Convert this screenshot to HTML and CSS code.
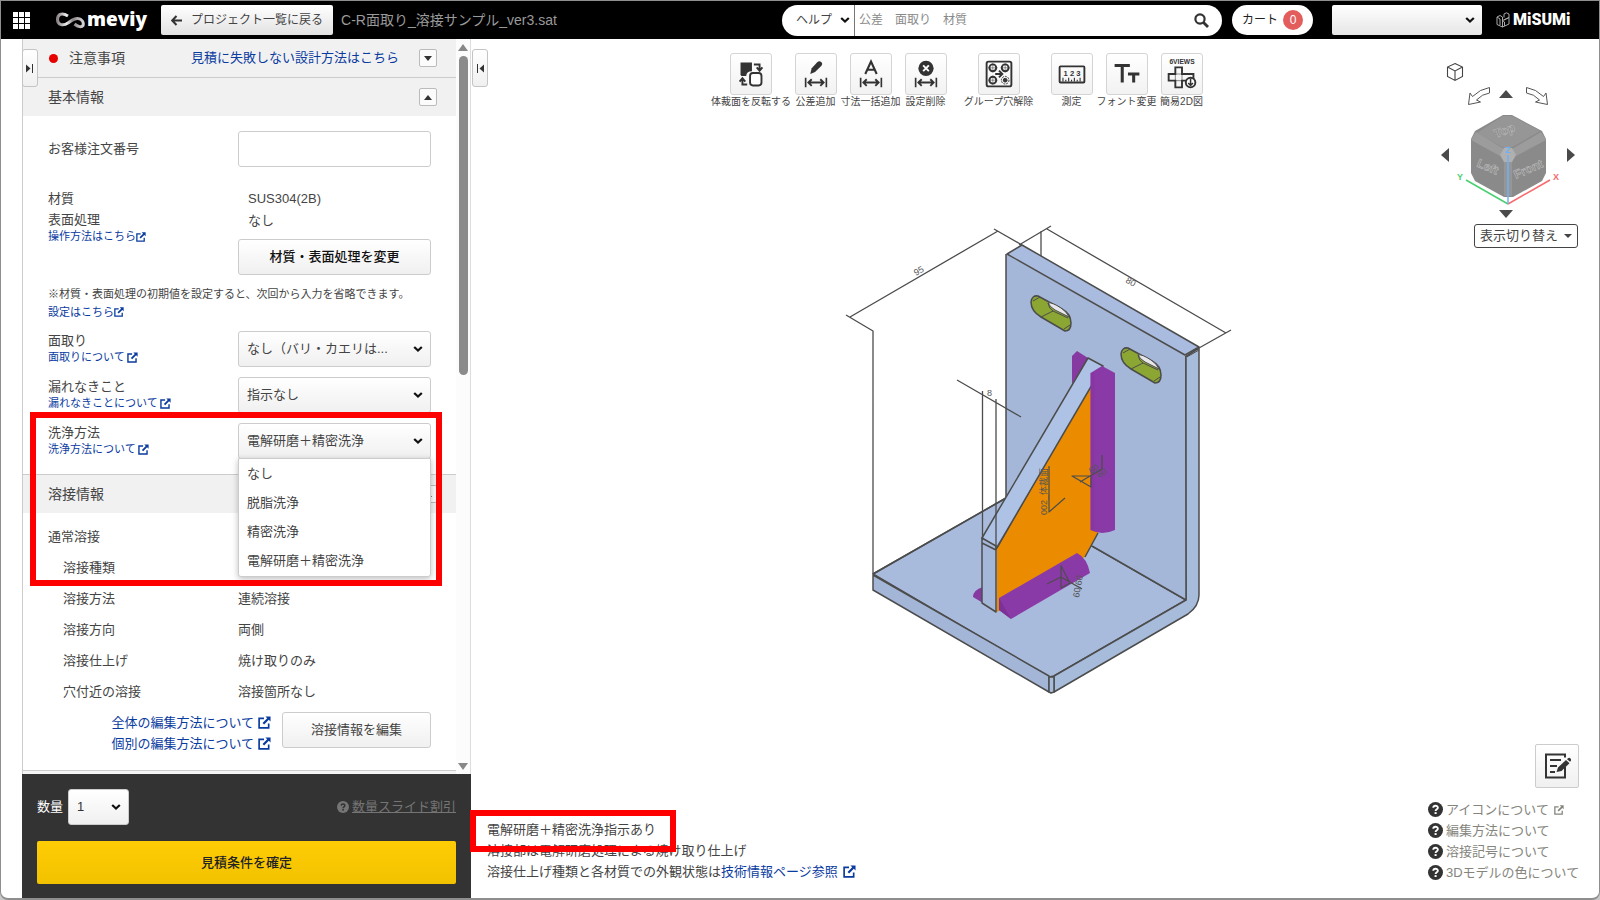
FILE: index.html
```html
<!DOCTYPE html>
<html lang="ja">
<head>
<meta charset="utf-8">
<title>meviy</title>
<link rel="stylesheet" href="styles.css">
</head>
<body>
<svg class="defs" aria-hidden="true">
  <symbol id="ext" viewBox="0 0 14 14"><path d="M6.500 2.500H1.200V12.800H11.500V8" fill="none" stroke="currentColor" stroke-width="1.800"/><path d="M8 .5h5.500V6l-1.900-1.900L6.600 9.200 4.900 7.500l5-5z" fill="currentColor"/></symbol>
  <symbol id="chev" viewBox="0 0 10 8"><path d="M1.200 2 5 5.600 8.800 2" fill="none" stroke="currentColor" stroke-width="2.200"/></symbol>
  <symbol id="help" viewBox="0 0 16 16"><circle cx="8" cy="8" r="8" fill="currentColor"/><path d="M5.600 6.200C5.700 3.300 10.500 3.300 10.500 6.100 10.500 7.900 8.100 7.800 8.100 9.700" fill="none" stroke="var(--mark)" stroke-width="2"/><rect x="7" y="10.800" width="2.200" height="2" fill="var(--mark)"/></symbol>
  <symbol id="span" viewBox="0 0 24 12"><path d="M1 1v10M23 1v10M4 6h16M7.500 2.500 4 6l3.500 3.500M16.500 2.500 20 6l-3.500 3.500" fill="none" stroke="currentColor" stroke-width="2"/></symbol>
</svg>
<div class="window">
  <header class="topbar">
    <button class="apps" aria-label="メニュー"><svg width="17" height="17" viewBox="0 0 17 17"><path fill="#fff" d="M0 0h5v5H0zM6 0h5v5H6zM12 0h5v5h-5zM0 6h5v5H0zM6 6h5v5H6zM12 6h5v5h-5zM0 12h5v5H0zM6 12h5v5H6zM12 12h5v5h-5z"/></svg></button>
    <a class="logo" href="#">
      <svg width="29" height="17" viewBox="0 0 29 17"><defs><linearGradient id="lg"><stop offset="0" stop-color="#8b8589"/><stop offset=".35" stop-color="#eee"/><stop offset=".6" stop-color="#8a8488"/><stop offset="1" stop-color="#d8d4d6"/></linearGradient></defs><path d="M12 4C5-.5 1.500 3 1.500 7.500c0 6 6 6.500 10.500 3.500 4-2.700 6-5 10-4.500 4 .4 6 4 5 7-1.500 2-5 1.500-8.500-1.500" fill="none" stroke="url(#lg)" stroke-width="3"/></svg>
      <span>meviy</span></a>
    <button class="back"><svg width="11" height="11" viewBox="0 0 11 11"><path d="M11 5.500H2M5.500 1 1.200 5.500l4.300 4.500" fill="none" stroke="#333" stroke-width="2"/></svg>プロジェクト一覧に戻る</button>
    <h1 class="filename">C-R面取り_溶接サンプル_ver3.sat</h1>
    <form class="search">
      <label class="pick help-pick"><select aria-label="検索対象"><option>ヘルプ</option></select><svg class="chev"><use href="#chev"/></svg></label>
      <input type="text" placeholder="公差　面取り　材質" aria-label="検索">
      <button type="button" aria-label="検索する"><svg width="15" height="15" viewBox="0 0 15 15"><circle cx="6" cy="6" r="4.600" fill="none" stroke="#333" stroke-width="2.200"/><path d="m9.500 9.500 4.500 4.500" stroke="#333" stroke-width="2.800"/></svg></button>
    </form>
    <button class="cart">カート<span>0</span></button>
    <label class="pick account"><select aria-label="アカウント"><option></option></select><svg class="chev"><use href="#chev"/></svg></label>
    <a class="misumi" href="#"><svg width="14" height="17" viewBox="0 0 14 17" fill="none" stroke="#aaa"><path d="M1 5 4 3.500 6.500 5v10L1 12.500zM1 5l3 2v6M6.500 8.500 13 5.500v6.500l-6.500 3M6.500 8.500l2 1.500v4M8 5.500V2L10.500.800 13 2v3.500L8 8"/></svg><span>MiSUMi</span></a>
  </header>

  <div class="work">
    <aside class="panel">
      <button class="collapse" aria-label="パネルを開く"><svg width="8" height="9" viewBox="0 0 8 9"><path d="M0 .5 4.500 4.500 0 8.500z" fill="#333"/><path d="M6.500 0v9" stroke="#333"/></svg></button>
      <div class="panel-scroll">
        <div class="panel-body">
          <section class="head notice"><i class="dot"></i><h2>注意事項</h2><a href="#">見積に失敗しない設計方法はこちら</a><button class="fold down" aria-label="注意事項を開く"></button></section>
          <section class="head"><h2>基本情報</h2><button class="fold up" aria-label="基本情報を閉じる"></button></section>
          <div class="fields">
            <div class="field order"><label for="order">お客様注文番号</label><input id="order" type="text"></div>
            <div class="field material">
              <div class="names"><p>材質</p><p>表面処理</p><a class="small" href="#">操作方法はこちら<svg class="ext s10"><use href="#ext"/></svg></a></div>
              <div class="values"><p>SUS304(2B)</p><p>なし</p><button class="btn">材質・表面処理を変更</button></div>
            </div>
            <div class="note"><p>※材質・表面処理の初期値を設定すると、次回から入力を省略できます。</p><a href="#">設定はこちら<svg class="ext s10"><use href="#ext"/></svg></a></div>
            <div class="field"><div class="cap"><label for="f1">面取り</label><a href="#">面取りについて<svg class="ext s11"><use href="#ext"/></svg></a></div>
              <div class="pick box"><select id="f1"><option>なし（バリ・カエリは...</option></select><svg class="chev"><use href="#chev"/></svg></div></div>
            <div class="field"><div class="cap"><label for="f2">漏れなきこと</label><a href="#">漏れなきことについて<svg class="ext s11"><use href="#ext"/></svg></a></div>
              <div class="pick box"><select id="f2"><option>指示なし</option></select><svg class="chev"><use href="#chev"/></svg></div></div>
            <div class="field"><div class="cap"><label for="f3">洗浄方法</label><a href="#">洗浄方法について<svg class="ext s11"><use href="#ext"/></svg></a></div>
              <div class="pick box"><select id="f3"><option>電解研磨＋精密洗浄</option></select><svg class="chev"><use href="#chev"/></svg>
                <ul class="menu" role="listbox" aria-label="洗浄方法"><li role="option">なし</li><li role="option">脱脂洗浄</li><li role="option">精密洗浄</li><li role="option" aria-selected="true">電解研磨＋精密洗浄</li></ul>
              </div></div>
          </div>
          <section class="head weld-head"><h2>溶接情報</h2><button class="fold up" aria-label="溶接情報を閉じる"></button></section>
          <div class="weld">
            <h3>通常溶接</h3>
            <dl>
              <dt>溶接種類</dt><dd></dd>
              <dt>溶接方法</dt><dd>連続溶接</dd>
              <dt>溶接方向</dt><dd>両側</dd>
              <dt>溶接仕上げ</dt><dd>焼け取りのみ</dd>
              <dt>穴付近の溶接</dt><dd>溶接箇所なし</dd>
            </dl>
            <div class="edit"><div class="links"><a href="#">全体の編集方法について<svg class="ext s13"><use href="#ext"/></svg></a><a href="#">個別の編集方法について<svg class="ext s13"><use href="#ext"/></svg></a></div><button class="btn soft">溶接情報を編集</button></div>
          </div>
          <div class="next-head"></div>
        </div>
        <div class="scrollbar"><i class="arr-up"></i><i class="thumb"></i><i class="arr-down"></i></div>
      </div>
      <footer class="quote">
        <div class="qty"><label for="qty">数量</label><div class="pick box"><select id="qty"><option>1</option></select><svg class="chev"><use href="#chev"/></svg></div>
          <a href="#"><svg class="q"><use href="#help"/></svg><u>数量スライド割引</u></a></div>
        <button class="confirm">見積条件を確定</button>
      </footer>
    </aside>

    <main class="stage">
      <svg class="model" viewBox="471 39 1128 859" preserveAspectRatio="xMidYMid meet" role="img" aria-label="3Dモデル">
        <g stroke="#4c4c4c" stroke-width="1.500" stroke-linejoin="round" fill="none">
          <path fill="#a9bbdd" d="M873 574 1006 498 1092 546 1186 600 1054 676 1049 677z"/>
          <path fill="#a4b6d7" d="M873 575 1049 676V692L873 590z"/>
          <path fill="#a7bbdb" d="M1185 357 1199 348V595Q1199 606 1188 614L1054 692V676L1186 600z"/>
          <path fill="#a7bbdb" d="M1049 677h5v15l-3 1-2-1z"/>
          <path stroke="none" fill="#a5b7d8" d="M1006 254 1185 355 1186 600 1092 546 1006 498z"/>
          <path d="M1092 546 1186 600V358M1006 498V254M873 574 1006 498"/>
          <path fill="#a9bbdf" d="M1007 254 1022 245 1199 347 1185 355z"/>
          <path stroke-width="1" d="M1185 358 1199 350"/>
          <g id="slot"><path fill="#8ba632" d="M1031 302Q1032 295 1038 296L1062 309Q1071 314 1071 323 1071 331 1065 331L1041 317Q1031 311 1031 302z"/><path fill="#e8e8ec" stroke-width="1" d="M1048 303Q1052 302 1061 308 1067 312 1069 317L1055 310Q1050 307 1048 303z"/><path stroke-width="1" d="M1048 303Q1049 309 1053 311L1068 318M1053 311 1041 317M1033 301 1040 297M1064 329 1070 325"/></g>
          <use href="#slot" x="90" y="52"/>
          <g stroke="none"><path fill="#8639a0" d="M1072 356 1077 351 1088 358 1072 384z"/><path fill="#8639a0" d="M983 587Q973 590 973 597L983 603z"/><path fill="#eb8c00" d="M1091 383 997 548V612L1085 557 1098 533V420z"/></g>
          <path d="M1098 533 1085 557M1091 383 1053 450 997 548"/>
          <path fill="#adc2e5" d="M1088 358 1103 366 996 549 982 538z"/><path fill="#a5b7d8" d="M982 538 996 546V612L982 603zM982 543 996 550"/>
          <g stroke="none"><path fill="#8a3aa6" d="M1090.500 373 1102 366 1115 373V530Q1102 536 1090.500 530z"/><path fill="#8030a0" opacity=".35" d="M1090.500 373h4v158l-4-1z"/><path fill="#8a3aa6" d="M999 598 1077 553Q1087 558 1090 573L1011 619 999 610z"/><path fill="#7c3196" d="M999 598 1011 619 999 610z"/></g>
          <g stroke-width="1.300"><path d="M850 317 998 231M846 315 873 331V574M994 229 1022 245M1047 229 1226 333M1019 245 1051 226M1199 348 1231 330M1041 231V256M957 380 1021 417M982.500 391V540M996 399V550"/></g>
          <g stroke-width="1.200"><path d="M1049 466V512L1065 498M1072 476H1091V487zM1080 482 1102 469V455M1061 566V588L1070 583zM1047 584 1061 577 1082 589"/></g>
        </g>
        <g class="dim"><text transform="translate(916 276) rotate(-30)">95</text><text transform="translate(1125 282) rotate(30)">80</text><text x="987" y="396">8</text><text transform="translate(1047 515) rotate(-90)">002_体裁面</text><text transform="translate(1091 474) rotate(-30)">60</text><text transform="translate(1099 478) rotate(-30)">60</text><text transform="translate(1079 598) rotate(-80)">60/60</text></g>
      </svg>

      <div class="tools">
        <button class="first"><i><svg viewBox="0 0 42 42"><path fill="#333" d="M10 9h12v9c-4 0-6 2-6 5h-5l-1-1z"/><rect x="20" y="20" width="12" height="13" rx="3" fill="#fff" stroke="#333" stroke-width="2"/><path d="M24 11h6v6M27 14l3 3.500 3-3.500M17 32h-5v-6M9 29l3-3.500 3 3.500" fill="none" stroke="#333" stroke-width="2"/></svg></i><span>体裁面を反転する</span></button>
        <button><i><svg viewBox="0 0 42 42"><path d="M15 21l1.500-6 6-6.500q2-2 4 0t0 4L20 19z" fill="#333"/><use href="#span" x="9" y="24" width="24" height="12"/></svg></i><span>公差追加</span></button>
        <button><i><svg viewBox="0 0 42 42"><path d="M15 21 21 8l6 13M17 16.500h8" fill="none" stroke="#333" stroke-width="2.200"/><use href="#span" x="9" y="24" width="24" height="12"/></svg></i><span>寸法一括追加</span></button>
        <button><i><svg viewBox="0 0 42 42"><circle cx="21" cy="15" r="8" fill="#333"/><path d="m18 12 6 6m0-6-6 6" stroke="#fff" stroke-width="2"/><use href="#span" x="9" y="24" width="24" height="12"/></svg></i><span>設定削除</span></button>
        <button class="wide"><i><svg viewBox="0 0 42 42" fill="none" stroke="#333"><rect x="8" y="8" width="26" height="26" rx="2" stroke-width="2"/><g stroke-width="2"><circle cx="14.500" cy="14.500" r="3.600"/><circle cx="27.500" cy="14.500" r="3.600"/><circle cx="14.500" cy="27.500" r="3.600"/></g><circle cx="27.500" cy="27.500" r="4" stroke-dasharray="2 1"/><circle cx="27.500" cy="27.500" r="2" fill="#333"/><path d="M17 21h7M21 17.500l3.500 3.500-3.500 3.500" stroke-width="2"/><path d="M14.500 9.500v10M9.500 14.500h10M27.500 9.500v10M22.500 14.500h10M14.500 22.500v10M9.500 27.500h10" stroke-width=".5"/></svg></i><span>グループ穴解除</span></button>
        <button><i><svg viewBox="0 0 42 42"><rect x="8" y="13" width="26" height="17" rx="1" fill="none" stroke="#333" stroke-width="2"/><path d="M11.500 29v-4M14.500 29v-2M17.500 29v-4M20.500 29v-2M23.500 29v-4M26.500 29v-2M29.500 29v-4" stroke="#333" stroke-width="1.200"/><text class="ruler" x="21" y="23" text-anchor="middle">1 2 3</text></svg></i><span>測定</span></button>
        <button><i><svg viewBox="0 0 42 42"><path d="M8 12h16M16 12v18M22 21h12M28 21v9" fill="none" stroke="#333" stroke-width="3.200"/></svg></i><span>フォント変更</span></button>
        <button><i><svg viewBox="0 0 42 42"><text class="views" x="21" y="11" text-anchor="middle">6VIEWS</text><path d="M14 14h7v7h12v7H21v7h-7v-7H7v-7h7z" fill="none" stroke="#333" stroke-width="2"/><path d="M14 21h7v7h-7z" fill="none" stroke="#333" stroke-width=".6"/><circle cx="30" cy="30" r="5" fill="#fff" stroke="#333" stroke-width="2"/><path d="M30 26v7m-2.500-2.500L30 33l2.500-2.500" fill="none" stroke="#333" stroke-width="1.600"/></svg></i><span>簡易2D図</span></button>
      </div>

      <div class="viewer">
        <button class="v-home" aria-label="ホーム"><svg width="18" height="20" viewBox="0 0 18 20"><path d="M9 1.500 16.500 5v9.500L9 18.500l-7.500-4V5zM1.500 5 9 9l7.500-4M9 9v9" fill="none" stroke="#444" stroke-width="1.100"/></svg></button>
        <button class="v-ccw" aria-label="左に回転"><svg width="24" height="20" viewBox="0 0 24 20"><path d="M22.500 1.500v5.500Q15 8 9.500 14l4 2L1.500 18.500 3 7l2.500 3.500Q13 3 22.500 1.500z" fill="#fff" stroke="#555"/></svg></button>
        <button class="v-up" aria-label="上"><svg width="16" height="10"><path d="M8 1 15 9H1z" fill="#4a4a4a"/></svg></button>
        <button class="v-cw" aria-label="右に回転"><svg width="24" height="20" viewBox="0 0 24 20"><path d="M1.500 1.500v5.500Q9 8 14.500 14l-4 2 12 2.500L21 7l-2.500 3.500Q11 3 1.500 1.500z" fill="#fff" stroke="#555"/></svg></button>
        <button class="v-left" aria-label="左"><svg width="10" height="16"><path d="M1 8 9 1v14z" fill="#4a4a4a"/></svg></button>
        <svg class="cube" width="108" height="96" viewBox="1454 113 108 96"><path fill="#8a8a8a" d="M1471 139 1475 131 1503 115H1512L1542 131 1546 139V173L1542 181 1513 197H1504L1475 181 1471 173z"/><path fill="#969696" d="M1477 133 1503 116h9l28 15-29 17h-7z"/><path fill="#9c9c9c" d="M1471 140 1476 132 1504 149 1500 156zM1546 140 1541 132 1512 149 1516 156z"/><path fill="#969696" d="M1504 162h8v34h-8z"/><path fill="#b0b0b0" d="M1500 155 1504 148H1512L1516 155 1512 162H1504z"/><g class="faces"><text transform="translate(1496 138) rotate(-20)">Top</text><text transform="translate(1476 166) rotate(24)">Left</text><text transform="translate(1516 179) rotate(-24)">Front</text></g><g fill="none" stroke-width="1.500"><path stroke="#4bd070" d="M1466 180 1508 204"/><path stroke="#f76a6e" d="M1550 180 1508 204"/><path stroke="#6fb0f5" d="M1508 204V155"/></g><g class="axes"><text x="1457" y="180" fill="#4bd070">Y</text><text x="1553" y="180" fill="#f76a6e">X</text><text x="1505" y="153" fill="#6fb0f5">Z</text></g></svg>
        <button class="v-right" aria-label="右"><svg width="10" height="16"><path d="M9 8 1 1v14z" fill="#4a4a4a"/></svg></button>
        <button class="v-down" aria-label="下"><svg width="16" height="10"><path d="M8 9 15 1H1z" fill="#4a4a4a"/></svg></button>
        <button class="v-switch">表示切り替え<i></i></button>
      </div>

      <div class="status"><p>電解研磨＋精密洗浄指示あり</p><p>溶接部は電解研磨処理による焼け取り仕上げ</p><p>溶接仕上げ種類と各材質での外観状態は<a href="#">技術情報ページ参照<svg class="ext s13"><use href="#ext"/></svg></a></p></div>

      <div class="aid">
        <button class="memo" aria-label="メモ"><svg width="28" height="28" viewBox="0 0 28 28"><path d="M22 15v10.500H3V2.500h19v3" fill="none" stroke="#333" stroke-width="2"/><path d="M7 8h11M7 14h7M7 20h5" stroke="#333" stroke-width="2"/><path d="m13.500 20 1.500-4.500L23 8l3.500 3.200-8 7.800zM24 7.200l1-1q1.500-.8 2.500.3t.3 2.500l-.8.800z" fill="#333"/></svg></button>
        <a href="#"><svg class="q"><use href="#help"/></svg>アイコンについて<svg class="ext s10"><use href="#ext"/></svg></a>
        <a href="#"><svg class="q"><use href="#help"/></svg>編集方法について</a>
        <a href="#"><svg class="q"><use href="#help"/></svg>溶接記号について</a>
        <a href="#"><svg class="q"><use href="#help"/></svg>3Dモデルの色について</a>
      </div>
      <button class="collapse" aria-label="パネルを閉じる"><svg width="8" height="9" viewBox="0 0 8 9"><path d="M8 .5 3.500 4.500 8 8.500z" fill="#333"/><path d="M1.500 0v9" stroke="#333"/></svg></button>
    </main>
  </div>
  <div class="mark mark-field"></div>
  <div class="mark mark-status"></div>
</div>
</body>
</html>
```

FILE: styles.css
```css
* { box-sizing: border-box; }
body { margin: 0; background: #c8c8c8; color: #444; font: 13px/20px "Liberation Sans", "Noto Sans CJK JP", sans-serif; }
h1, h2, h3, p, ul, dl, dd { margin: 0; padding: 0; font-weight: 400; }
button, input, select { font: inherit; color: inherit; margin: 0; }
button { padding: 0; border: 0; background: none; }
a { color: #0a3b9f; text-decoration: none; }
svg { display: block; flex: none; }
.defs { position: absolute; width: 0; height: 0; }
.window { position: relative; display: flex; flex-direction: column; height: 100vh; border: 1px solid #8e8e8e; border-bottom-width: 2px; border-radius: 0 0 8px 8px; background: #fff; overflow: hidden; }

/* top bar */
.topbar { display: flex; align-items: center; height: 38px; flex: none; padding: 0 27px 0 12px; background: #000; }
.logo { display: flex; align-items: center; gap: 2px; margin-left: 26px; width: 92px; color: #fff; font: 800 19px/24px "Open Sans", sans-serif; }
.logo span { margin-top: -2px; }
.back { display: flex; align-items: center; gap: 9px; height: 30px; margin-left: 13px; padding: 0 10px; border-radius: 2px; background: linear-gradient(#fff, #e2e2e2); font-size: 12px; }
.filename { margin-left: 8px; font-size: 14px; color: #9a9a9a; white-space: nowrap; }
.search { display: flex; align-items: center; width: 440px; height: 31px; margin-left: auto; border-radius: 16px; background: #fff; overflow: hidden; font-size: 12px; }
.search input { flex: 1; min-width: 0; height: 31px; padding: 0 4px; border: 0; background: none; }
.search input::placeholder { color: #888; }
.search button { margin-right: 13px; }
.pick { position: relative; display: block; }
.pick select { display: block; appearance: none; width: 100%; height: 100%; border: 0; background: none; border-radius: 3px; }
.chev { position: absolute; right: 7px; top: 50%; margin-top: -4px; width: 10px; height: 8px; color: #111; pointer-events: none; }
.help-pick { width: 73px; height: 31px; border-right: 1px solid #777; }
.help-pick select { padding-left: 14px; }
.help-pick .chev { right: 4px; }
.cart { display: flex; align-items: center; justify-content: center; gap: 5px; width: 81px; height: 30px; margin-left: 10px; border-radius: 15px; background: #fff; font-size: 12px; color: #222; }
.cart span { width: 20px; height: 20px; border-radius: 50%; background: #e35d5d; color: #fff; }
.account { width: 150px; height: 30px; margin-left: 19px; border-radius: 2px; background: linear-gradient(#fff, #e6e6e6); }
.misumi { display: flex; align-items: center; gap: 3px; margin-left: 14px; width: 76px; color: #fff; font: 900 16px/20px Roboto, sans-serif; }

/* panel */
.work { display: flex; flex: 1; min-height: 0; padding-left: 21px; }
.panel { position: relative; display: flex; flex-direction: column; flex: none; width: 449px; border-left: 1px solid #ccc; }
.panel-scroll { display: flex; flex: 1; min-height: 0; }
.panel-body { display: flex; flex-direction: column; flex: 1; min-width: 0; overflow: hidden; }
.collapse { position: absolute; left: -1px; top: 10px; width: 16px; height: 38px; display: grid; place-items: center; border: 1px solid #c4c4c4; border-radius: 3px; background: linear-gradient(#fff, #f0f0f0); }
.head { display: flex; align-items: center; flex: none; height: 38px; padding: 0 19px 0 25px; background: #f1f1f1; }
.head h2 { font-size: 14px; }
.notice { height: 39px; border-bottom: 1px solid #ccc; padding-left: 26px; }
.notice a { margin-left: 66px; }
.dot { width: 9px; height: 9px; margin-right: 11px; border-radius: 50%; background: #e60000; }
.fold { width: 18px; height: 18px; margin-left: auto; border: 1px solid #bbb; border-radius: 2px; background: #fbfbfb; display: grid; place-items: center; }
.fold::after { content: ""; border: 4px solid transparent; }
.down::after { border-top: 5px solid #333; border-bottom: 0; }
.up::after { border-bottom: 5px solid #333; border-top: 0; }
.fields { padding: 15px 25px; }
.field { display: flex; margin-top: 10px; height: 36px; align-items: center; justify-content: space-between; }
.order { margin-top: 0; }
.order input { width: 193px; height: 36px; border: 1px solid #ccc; border-radius: 3px; }
.material { height: auto; margin-top: 21px; align-items: flex-start; }
.names p { line-height: 21px; }
.values { width: 193px; }
.values p { padding-left: 10px; line-height: 22px; }
.btn { display: block; width: 193px; height: 36px; border: 1px solid #ccc; border-radius: 3px; background: linear-gradient(#fff, #f0f0f0); }
.values .btn { margin-top: 7px; font-weight: 500; color: #111; }
.note { margin-top: 10px; font-size: 11px; line-height: 18px; white-space: nowrap; }
.small, .cap a { font-size: 11px; line-height: 16px; }
.note a, .small, .cap a, .links a { display: flex; align-items: center; }
.names .small { line-height: 13px; }
.cap a { gap: 2px; }
.cap label { display: block; line-height: 16px; }
.s10 { width: 10px; height: 10px; }
.s11 { width: 11px; height: 11px; }
.s13 { width: 13px; height: 13px; }
.box { width: 193px; height: 36px; border: 1px solid #ccc; border-radius: 3px; background: linear-gradient(#fff, #f0f0f0); }
.box select { padding: 0 8px; }
.menu { position: absolute; z-index: 2; left: -1px; top: 34px; width: 193px; padding-bottom: 1px; list-style: none; border: 1px solid #ccc; border-radius: 0 0 3px 3px; background: #fff; box-shadow: 0 2px 6px rgba(0,0,0,.25); }
.menu li { padding: 0 8px; line-height: 29px; }
.weld-head { height: 39px; border-top: 1px solid #ccc; }
.weld { padding: 8px 25px 16px; }
.weld h3 { font-size: 13px; line-height: 31px; }
.weld dl { display: grid; grid-template-columns: 175px 1fr; grid-auto-rows: 31px; line-height: 31px; padding-left: 15px; }
.edit { display: flex; justify-content: flex-end; margin-top: 5px; }
.links { margin-right: 11px; line-height: 21px; }
.links a { gap: 4px; }
.soft { width: 149px; }
.next-head { flex: 1; border-top: 1px solid #ccc; background: #f4f4f4; }
.scrollbar { display: flex; flex-direction: column; align-items: center; width: 15px; padding: 5px 0 4px; background: #fcfcfc; border-right: 1px solid #ddd; }
.arr-up, .arr-down { border: 5px solid transparent; }
.arr-up { border-bottom: 7px solid #888; border-top: 0; }
.arr-down { border-top: 7px solid #888; border-bottom: 0; margin-top: auto; }
.thumb { width: 9px; height: 44%; margin-top: 5px; border-radius: 5px; background: #8b8b8b; }
.quote { flex: none; margin-left: -1px; padding: 15px 15px 14px; background: #333; }
.qty { display: flex; align-items: center; gap: 5px; color: #fff; }
.qty .box { width: 61px; color: #333; }
.qty a { display: flex; align-items: center; gap: 3px; margin-left: auto; color: #757575; --mark: #333; }
.qty .q { width: 12px; height: 12px; }
.confirm { width: 100%; height: 43px; margin-top: 16px; border-radius: 2px; background: linear-gradient(#ffcd05, #f2c200); color: #222; font-weight: 500; }

/* stage */
.stage { position: relative; flex: 1; min-width: 0; }
.model { position: absolute; inset: 0; width: 100%; height: 100%; }
.dim text { font: 9px "Liberation Sans", "Noto Sans CJK JP", sans-serif; fill: #555; }
.tools { position: absolute; left: 240px; top: 14px; display: flex; }
.stage .collapse { top: 10px; left: 1px; }
.tools button { display: flex; flex-direction: column; align-items: center; width: 55px; font-size: 10px; line-height: 14px; white-space: nowrap; }
.tools .first { width: 80px; margin-right: -3px; }
.tools .wide { width: 91px; }
.tools i { width: 42px; height: 42px; border: 1px solid #d4d4d4; border-radius: 3px; background: linear-gradient(#fff, #f2f2f2); color: #333; }
.tools svg { width: 40px; height: 40px; }
.ruler { font: bold 8px "Liberation Sans", sans-serif; fill: #333; }
.views { font: bold 7px "Liberation Sans", sans-serif; fill: #333; }
.viewer { position: absolute; right: 21px; top: 23px; width: 138px; height: 188px; }
.viewer > * { position: absolute; }
.v-home { left: 6px; top: 0; }
.v-ccw { left: 27px; top: 24px; }
.v-up { left: 58px; top: 27px; }
.v-cw { left: 85px; top: 24px; }
.v-left { left: 0; top: 85px; }
.v-right { right: 2px; top: 85px; }
.v-down { left: 58px; top: 147px; }
.cube { left: 14px; top: 51px; }
.faces text { font: bold 12px "Liberation Sans", sans-serif; fill: #858585; stroke: #bbb; stroke-width: .6px; }
.axes text { font: bold 9px "Liberation Sans", sans-serif; }
.v-switch { right: 0; bottom: 2px; display: flex; align-items: center; justify-content: center; gap: 6px; width: 104px; height: 24px; border: 1px solid #444; border-radius: 3px; background: #fff; }
.v-switch i { border: 4px solid transparent; border-top-color: #444; border-bottom: 0; }
.status { position: absolute; left: 16px; bottom: 16px; line-height: 21px; }
.status a { display: inline-flex; align-items: center; gap: 5px; }
.aid { position: absolute; right: 20px; bottom: 15px; display: flex; flex-direction: column; width: 151px; line-height: 21px; }
.memo { display: grid; place-items: center; align-self: flex-end; width: 44px; height: 44px; margin-bottom: 11px; border: 1px solid #ccc; border-radius: 2px; background: linear-gradient(#fff, #f0f0f0); }
.aid a { display: flex; align-items: center; gap: 3px; color: #85857d; white-space: nowrap; }
.aid .s10 { margin-left: 2px; }
.aid .q { width: 15px; height: 15px; color: #333; --mark: #fff; }
.mark { position: absolute; z-index: 5; border: 6px solid #f00; pointer-events: none; }
.mark-field { left: 29px; top: 411px; width: 412px; height: 174px; }
.mark-status { left: 469px; top: 809px; width: 206px; height: 42px; }
```
